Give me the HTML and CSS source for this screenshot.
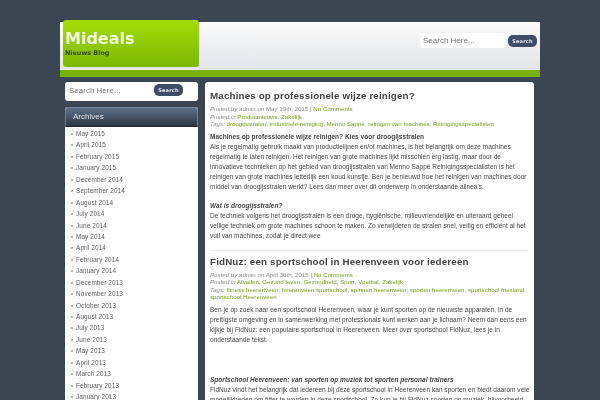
FILE: index.html
```html
<!DOCTYPE html>
<html lang="nl">
<head>
<meta charset="utf-8">
<title>Mideals</title>
<link rel="stylesheet" href="styles.css">
</head>
<body>
<div class="wrap">
  <header class="header">
    <div class="logo">
      <h1>Mideals</h1>
      <p>Nieuws Blog</p>
    </div>
    <form class="search head-search">
      <span class="field">Search Here...</span>
      <span class="btn">Search</span>
    </form>
  </header>
  <div class="columns">
    <aside class="sidebar">
      <form class="search side-search">
        <span class="field">Search Here...</span>
        <span class="btn">Search</span>
      </form>
      <section class="widget">
        <h2>Archives</h2>
        <ul>
          <li>May 2015</li><li>April 2015</li><li>February 2015</li><li>January 2015</li>
          <li>December 2014</li><li>September 2014</li><li>August 2014</li><li>July 2014</li>
          <li>June 2014</li><li>May 2014</li><li>April 2014</li><li>February 2014</li>
          <li>January 2014</li><li>December 2013</li><li>November 2013</li><li>October 2013</li>
          <li>August 2013</li><li>July 2013</li><li>June 2013</li><li>May 2013</li>
          <li>April 2013</li><li>March 2013</li><li>February 2013</li><li>January 2013</li>
        </ul>
      </section>
    </aside>
    <main class="content">
      <article class="post">
        <h2>Machines op professionele wijze reinigen?</h2>
        <div class="meta">
          <div><i>Posted by</i> admin <i>on</i> May 19th, 2015 | <a>No Comments</a></div>
          <div><i>Posted in</i> <a>Productnieuws</a>, <a>Zakelijk</a></div>
          <div><i>Tags:</i> <a>droogijsstralen</a>, <a>industriele-reiniging</a>, <a>Menno Sappé</a>, <a>reinigen van machines</a>, <a>Reinigingsspecialisten</a></div>
        </div>
        <p><b>Machines op professionele wijze reinigen? Kies voor droogijsstralen</b><br>
        Als je regelmatig gebruik maakt van productielijnen en/of machines, is het belangrijk om deze machines regelmatig te laten reinigen. Het reinigen van grote machines lijkt misschien erg lastig, maar door de innovatieve technieken op het gebied van droogijsstralen van Menno Sappé Reinigingsspecialisten is het reinigen van grote machines letterlijk een koud kunstje. Ben je benieuwd hoe het reinigen van machines door middel van droogijsstralen werkt? Lees dan meer over dit onderwerp in onderstaande alinea's.</p>
        <p class="sub"><b><i>Wat is droogijsstralen?</i></b><br>
        De techniek volgens het droogijsstralen is een droge, hygiënische, milieuvriendelijke en uiteraard geheel veilige techniek om grote machines schoon te maken. Zo verwijderen de stralen snel, veilig en efficiënt al het vuil van machines, zodat je direct wee</p>
      </article>
      <article class="post second">
        <h2>FidNuz: een sportschool in Heerenveen voor iedereen</h2>
        <div class="meta">
          <div><i>Posted by</i> admin <i>on</i> April 30th, 2015 | <a>No Comments</a></div>
          <div><i>Posted in</i> <a>Afvallen</a>, <a>Gezond leven</a>, <a>Gezondheid</a>, <a>Sport</a>, <a>Voetbal</a>, <a>Zakelijk</a></div>
          <div><i>Tags:</i> <a>fitness heerenveen</a>, <a>heerenveen sportschool</a>, <a>spinnen heerenveen</a>, <a>sporten heerenveen</a>, <a>sportschool friesland</a>, <a>sportschool Heerenveen</a></div>
        </div>
        <p>Ben je op zoek naar een sportschool Heerenveen, waar je kunt sporten op de nieuwste apparaten, in de prettigste omgeving en in samenwerking met professionals kunt werken aan je lichaam? Neem dan eens een kijkje bij FidNuz: een populaire sportschool in Heerenveen. Meer over sportschool FidNuz, lees je in onderstaande tekst.</p>
        <p class="late"><b><i>Sportschool Heerenveen: van sporten op muziek tot sporten personal trainers</i></b><br>
        FidNuz vindt het belangrijk dat iedereen bij deze sportschool in Heerenveen kan sporten en biedt daarom vele<br>
        mogelijkheden om fitter te worden in deze sportschool. Zo kun je bij FidNuz sporten op muziek, bijvoorbeeld</p>
      </article>
    </main>
  </div>
</div>
</body>
</html>
```
FILE: styles.css
```css
html, body { margin: 0; padding: 0; height: 400px; overflow: hidden; }
body { background: #3b4652; font-family: "Liberation Sans", Arial, sans-serif; color: #444; font-size: 6.5px; }
.wrap { width: 480px; margin: 0 0 0 60px; padding-top: 22px; height: 378px; overflow: hidden; filter: blur(.25px); }
.header {
  height: 48px; display: flex; justify-content: space-between; align-items: flex-start;
  background: linear-gradient(#fbfbfb, #e2e4e7);
  border-bottom: 7px solid #78b205; box-shadow: inset 0 -1px 0 #e8eee0; position: relative;
}
.logo {
  width: 136px; height: 47px; margin: -2px 0 0 3px; box-sizing: border-box; padding: 9px 0 0 2px;
  background: linear-gradient(#a4dc08, #7cb805); border-radius: 3px;
}
.logo h1 { margin: 0; font: bold 16px/19px "DejaVu Sans", sans-serif; color: #f2fbe0; }
.logo p { margin: 1px 0 0; font: bold 6.4px/9px "DejaVu Sans", sans-serif; color: #2f4a06; }
.search { display: flex; align-items: center; }
.field {
  background: #fff; color: #777; font-size: 8px; line-height: 15px; height: 15px; display: block;
  border-radius: 2px; padding-left: 3px; box-sizing: border-box; width: 85px; box-shadow: 0 0 0 .5px #eceef0;
}
.btn {
  background: #3e4c68; color: #e8ebf0; font: bold 5px/12px "DejaVu Sans", sans-serif; height: 12px;
  width: 29px; text-align: center; border-radius: 5px; margin-left: 3px; letter-spacing: .2px;
}
.head-search { margin: 11px 3px 0 0; }
.columns { display: flex; align-items: flex-start; margin-top: 5px; padding-left: 5px; }
.sidebar { width: 133px; flex: none; }
.side-search { background: #fff; border-radius: 3px; height: 19px; padding-left: 1px; align-items: flex-start; }
.side-search .btn { margin-top: 2px; }
.side-search .field { line-height: 17px; height: 18px; box-shadow: none; }
.widget { margin-top: 6px; background: #fff; border-radius: 3px 3px 0 0; }
.widget h2 {
  margin: 0; height: 20px; box-sizing: border-box; padding-left: 7px;
  font: normal 8px/18px "Liberation Sans", sans-serif; color: #dfe4ea;
  background: linear-gradient(#5d7189, #2c3644); border: 1px solid #6f8298; border-bottom: 1px solid #1d232c; border-radius: 3px 3px 0 0;
}
.widget ul { list-style: none; margin: 0; padding: 1px 0 0 6px; }
.widget li { height: 11.45px; line-height: 11.45px; font-size: 6.4px; color: #5c5c5c; letter-spacing: .12px; padding-left: 5px; position: relative; }
.widget li::before { content: ""; position: absolute; left: 0; top: 5px; width: 2px; height: 2px; border-radius: 50%; background: #999; }
.content { width: 329px; flex: none; margin-left: 7px; background: #fff; border-radius: 3px 3px 0 0; padding: 0 6px 0 5px; box-sizing: border-box; }
.post h2 { margin: 0; padding-top: 7px; font: bold 9.8px/14px "Liberation Sans", sans-serif; color: #444; letter-spacing: .15px; }
.second h2 { padding-top: 4px; }
.meta { margin-top: 2px; color: #8c8c8c; font-size: 6.15px; line-height: 7.5px; }
.meta a { color: #76a015; }
.post p { margin: 4px 0 0; line-height: 10px; font-size: 6.5px; letter-spacing: .03px; }
.post p.sub { margin-top: 9px; }
.post p.late { margin-top: 30px; white-space: nowrap; }
.second { margin-top: 9px; border-top: 1px solid #eee; padding-top: 0; }
```
